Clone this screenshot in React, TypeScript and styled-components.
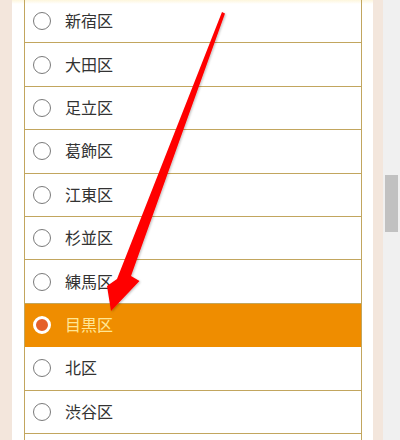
import React from "react";
import styled, { createGlobalStyle } from "styled-components";

const WARDS = [
  "新宿区",
  "大田区",
  "足立区",
  "葛飾区",
  "江東区",
  "杉並区",
  "練馬区",
  "目黒区",
  "北区",
  "渋谷区",
];

const SELECTED = "目黒区";

const GlobalStyle = createGlobalStyle`
  html, body {
    margin: 0;
    padding: 0;
    background: #ffffff;
    overflow: hidden;
  }
  body {
    font-family: "Noto Sans CJK JP", "Noto Sans", sans-serif;
  }
`;

export default function App() {
  return (
    <>
      <GlobalStyle />
      <Page>
        <SideStrip />
        <Panel>
          <List>
            {WARDS.map((name) => {
              const active = name === SELECTED;
              return (
                <Row key={name} $active={active}>
                  <Radio $active={active} />
                  <Label $active={active}>{name}</Label>
                </Row>
              );
            })}
            {/* next row is scrolled below the fold */}
            <Row $active={false} aria-hidden />
          </List>
        </Panel>
        <SideStrip $width={10} />
        <ScrollTrack>
          <ScrollThumb />
        </ScrollTrack>
        <Arrow viewBox="0 0 400 440" width="400" height="440">
          <defs>
            <filter id="shadow" x="-20%" y="-20%" width="140%" height="140%">
              <feDropShadow dx="1" dy="1" stdDeviation="1" floodColor="#000" floodOpacity="0.25" />
            </filter>
          </defs>
          <polygon
            filter="url(#shadow)"
            fill="#ff0000"
            points="222,12 225,13.5 131,276 139.5,281 111,311 107,286 117,279"
          />
        </Arrow>
      </Page>
    </>
  );
}

const Page = styled.div`
  position: relative;
  display: flex;
  width: 400px;
  height: 440px;
  overflow: hidden;
  background: #ffffff;
`;

const SideStrip = styled.div<{ $width?: number }>`
  flex: 0 0 ${(p) => p.$width ?? 12}px;
  background: #f3e6dc;
`;

const Panel = styled.div`
  flex: 1;
  padding: 0 11px 0 12px;
  background: #ffffff;
  background-image: linear-gradient(#fdf6dc, #ffffff 4px);
`;

const List = styled.ul`
  list-style: none;
  margin: 0;
  padding: 0;
  border-left: 1px solid #c2a65e;
  border-right: 1px solid #c2a65e;
`;

const Row = styled.li<{ $active: boolean }>`
  box-sizing: border-box;
  height: 43.4px;
  display: flex;
  align-items: center;
  gap: 14px;
  padding: 0 0 2px 8px;
  border-bottom: 1px solid ${(p) => (p.$active ? "#ef8d00" : "#c2a65e")};
  background: ${(p) => (p.$active ? "#ef8d00" : "transparent")};
`;

const Radio = styled.span<{ $active: boolean }>`
  box-sizing: border-box;
  width: 18px;
  height: 18px;
  border-radius: 50%;
  margin-top: 2px;
  border: ${(p) => (p.$active ? "3.5px solid #ffffff" : "1px solid #7a7a7a")};
  background: ${(p) => (p.$active ? "#e5602a" : "#ffffff")};
  flex: 0 0 auto;
`;

const Label = styled.span<{ $active: boolean }>`
  font-size: 16px;
  line-height: 1;
  color: ${(p) => (p.$active ? "#ffe694" : "#333333")};
`;

const ScrollTrack = styled.div`
  flex: 0 0 17px;
  background: #f0f0f0;
  padding: 175px 2px 0;
  box-sizing: border-box;
`;

const ScrollThumb = styled.div`
  height: 57px;
  background: #c1c1c1;
`;

const Arrow = styled.svg`
  position: absolute;
  left: 0;
  top: 0;
  pointer-events: none;
`;
